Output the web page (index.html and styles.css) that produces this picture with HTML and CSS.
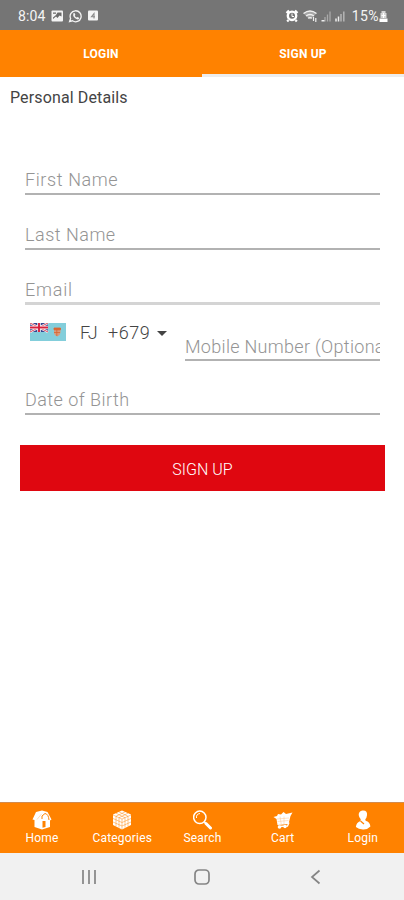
FILE: index.html
```html
<!DOCTYPE html>
<html lang="en">
<head>
  <meta charset="UTF-8">
  <meta name="viewport" content="width=device-width, initial-scale=1.0">
  <title>Sign Up</title>
  <link rel="stylesheet" href="styles.css">
</head>
<body>
  <div class="status-bar">
    <span class="time">8:04</span>
    <svg class="status-left" width="48" height="14" viewBox="0 0 48 14">
      <rect x="0.5" y="1.500" width="11.500" height="11" rx="1" fill="#f4f4f4"/>
      <path d="M2 3.500h3v1.200H2zM6.500 3.500h4v4L8.500 6.500 6.500 9 5 7.500 2 10V8.500l3-2.500z" fill="#6b6b6b"/>
      <path d="M18.600 12.500l1-3A5.500 5.500 0 1 1 21.500 11.800z" fill="none" stroke="#f4f4f4" stroke-width="1.300"/>
      <path d="M22.300 4.300l1.200-.3.900 1.800-.6.900q.7 1.300 2 1.900l.9-.7 1.500 1-.6 1.300q-1.500.7-3.800-1.300-2.400-2.400-1.500-4.600z" fill="#f4f4f4"/>
      <rect x="37" y="1.500" width="10" height="10" rx="1" fill="#f4f4f4"/>
      <path d="M43 9.500V4.500L40.500 7.700H44" fill="none" stroke="#8a8a8a" stroke-width="1.100"/>
    </svg>
    <svg class="status-right" width="62" height="14" viewBox="0 0 62 14">
      <circle cx="7" cy="6.800" r="4.200" fill="none" stroke="#fff" stroke-width="2.400"/>
      <path d="M1.500 4l2.500-2.500M12.500 4L10 1.500M3.500 11l-1.300 1.500M10.500 11l1.300 1.500" stroke="#fff" stroke-width="2.200"/>
      <path d="M7 4.500V7.500h2" fill="none" stroke="#fff" stroke-width="1"/>
      <path d="M18.500 4.500q6.500-5 13 0L27 8.500l-2 2z" fill="#a5a5a5"/>
      <path d="M18.500 4.500q6.500-5 13 0M21 7q4-3 8 0M23 9.300q2-1.500 4 0" fill="none" stroke="#f0f0f0" stroke-width="1.300"/>
      <path d="M28.500 8v4M30.800 9v4" stroke="#eee" stroke-width="1.200"/>
      <path d="M40 8v4.500M42.500 5.500v7M45 2.500v10" stroke="#aaa" stroke-width="1.300"/>
      <path d="M36.500 11.800h3M51 9.500v3M53.500 7.500v5" stroke="#eee" stroke-width="1.500"/>
      <path d="M56 5v7.500M58.800 2.500v10" stroke="#b5b5b5" stroke-width="1.500"/>
    </svg>
    <span class="battery-text">15%</span>
    <svg class="battery" width="9" height="14" viewBox="0 0 9 14">
      <path d="M2.500 2h4v2h1v5h-6V4h1z" fill="#d5d5d5"/>
      <path d="M.5 9.500h8V13h-8z" fill="#fff"/>
      <path d="M4.500 4v5M2.500 6.500h4" stroke="#fff" stroke-width="1"/>
    </svg>
  </div>

  <div class="tabs">
    <button class="tab">LOGIN</button>
    <button class="tab active">SIGN UP</button>
  </div>

  <main class="content">
    <h1>Personal Details</h1>
    <form class="signup-form">
      <div class="field"><input type="text" class="first-name" placeholder="First Name"></div>
      <div class="field"><input type="text" class="last-name" placeholder="Last Name"></div>
      <div class="field"><input type="text" class="email" placeholder="Email"></div>
      <div class="phone-row">
        <div class="country">
          <svg class="flag" width="36" height="18" viewBox="0 0 36 18">
            <rect width="36" height="18" fill="#83cedb"/>
            <rect width="18" height="9" fill="#34458f"/>
            <path d="M0 0l18 9M18 0L0 9" stroke="#fff" stroke-width="2.200"/>
            <path d="M0 0l18 9M18 0L0 9" stroke="#d32f49" stroke-width="0.900"/>
            <path d="M9 0v9M0 4.500h18" stroke="#fff" stroke-width="3.400"/>
            <path d="M9 0v9M0 4.500h18" stroke="#d8203c" stroke-width="1.900"/>
            <path d="M24 5h6.500v4.500q0 2.500-3.200 4-3.300-1.500-3.300-4z" fill="#d99a7c"/>
            <path d="M24 5h6.500v1.800H24zM26.800 6v7M24 9.500h6" stroke="#d8662f" stroke-width="0.800" fill="#dc6637"/>
          </svg>
          <span class="country-code">FJ</span>
          <span class="dial-code">+679</span>
          <span class="caret"></span>
        </div>
        <input type="text" class="mobile" placeholder="Mobile Number (Optional)">
      </div>
      <div class="field birth-row"><input type="text" class="birth" placeholder="Date of Birth"></div>
      <button type="button" class="signup-btn">SIGN UP</button>
    </form>
  </main>

  <nav class="bottom-nav">
    <a class="nav-item home">
      <svg width="20" height="20" viewBox="0 0 20 20">
        <path d="M0.500 9.500L4 2l6-1.500V19.500L2.500 17V10z" fill="#fff"/>
        <path d="M10 .5l5.500 1.500 4 7.500-1.500 1v6.500L10 19.500z" fill="#fff"/>
        <path d="M10 9V6l3-2.500q3.500.5 4 6.500" fill="none" stroke="#ff8200" stroke-width="1"/>
        <path d="M10.500 11h3v6l-3 .8z" fill="#ff8200"/>
        <path d="M9.500 4L5 9.500" stroke="#ffc68a" stroke-width=".6"/>
      </svg>
      <span>Home</span>
    </a>
    <a class="nav-item categories">
      <svg width="20" height="20" viewBox="0 0 20 20">
        <path d="M10 .5L19 4.500V15l-9 4.500L1 15V4.500z" fill="#fff"/>
        <path d="M1 5l9 4 9-4M10 9v10.500M1 8.500l9 4 9-4M1 12l9 4 9-4M4 6.300v10M7 7.700v10M13 7.700v10M16 6.300v10M4 3.200l9 4.500M7 1.900l9 4.400M16 3.200L7 7.700M13 1.900L4 6.300" fill="none" stroke="#ff8200" stroke-width=".45"/>
      </svg>
      <span>Categories</span>
    </a>
    <a class="nav-item search">
      <svg width="20" height="20" viewBox="0 0 20 20">
        <circle cx="6.800" cy="7.300" r="6.200" fill="none" stroke="#fff" stroke-width="1.500"/>
        <path d="M3.500 8q-.5-4 3.500-4.500" fill="none" stroke="#fff" stroke-width="1"/>
        <path d="M11.300 11.800l1.300 1.300" stroke="#fff" stroke-width="1.500"/>
        <path d="M13 13.500l4.500 4.500" stroke="#fff" stroke-width="3" stroke-linecap="round"/>
      </svg>
      <span>Search</span>
    </a>
    <a class="nav-item cart">
      <svg width="20" height="20" viewBox="0 0 20 20">
        <path d="M.5 7L4 6l1-2 3 .5L10.500 2l2.500 2L19.500 2.500 17.500 6l-2 8-11 1-1-6z" fill="#fff"/>
        <path d="M4 9l12-1M4.500 11.500l11-1M7 6.500l1.200 7.500M11 6.500V14" stroke="#ffc58c" stroke-width=".5"/>
        <path d="M16 12.500L14.500 16 5 16.500" fill="none" stroke="#fff" stroke-width="1.300"/>
        <circle cx="6.500" cy="17" r="1.800" fill="#fff"/>
        <circle cx="12" cy="16.500" r="1.700" fill="#fff"/>
      </svg>
      <span>Cart</span>
    </a>
    <a class="nav-item login">
      <svg width="20" height="20" viewBox="0 0 20 20">
        <path d="M9.500.5C13 .2 14.500 2.300 14 5.200q-.3 2.600-1.700 4l.3 1.500q4.400 1.300 4.800 5.800-3 3.300-7.500 3-4.500-.2-7-2.500Q3.200 12.500 7.500 11l.2-1.800Q6 7.500 5.700 5 5.600 1 9.500.5z" fill="#fff"/>
        <path d="M7.500 11l3.500 3" stroke="#ff8200" stroke-width="1.200"/>
      </svg>
      <span>Login</span>
    </a>
  </nav>

  <div class="system-nav">
    <svg width="16" height="16" viewBox="0 0 16 16"><path d="M2 1v14M8 1v14M14 1v14" stroke="#8b8b8b" stroke-width="1.800"/></svg>
    <svg width="16" height="16" viewBox="0 0 16 16"><rect x="1" y="1" width="14" height="14" rx="4" fill="none" stroke="#858585" stroke-width="1.700"/></svg>
    <svg width="16" height="16" viewBox="0 0 16 16"><path d="M12.500 1.500L5 8l7.500 6.500" fill="none" stroke="#858585" stroke-width="1.700"/></svg>
  </div>
</body>
</html>
```
FILE: styles.css
```css
* {
  box-sizing: border-box;
}
body {
  margin: 0;
  height: 900px;
  display: flex;
  flex-direction: column;
  overflow: hidden;
  font-family: Roboto, "Liberation Sans", sans-serif;
  background-color: #fff;
  color: #444;
}
button, input {
  font-family: inherit;
  border: none;
  border-radius: 0;
  outline: none;
}
.status-bar {
  height: 30px;
  flex: none;
  display: flex;
  align-items: center;
  padding: 1px 16px 0 18px;
  background-color: #757575;
  color: #f4f4f4;
  font-size: 14px;
}
.time {
  width: 33px;
  letter-spacing: 0.1px;
}
.status-right {
  margin-left: auto;
}
.battery-text {
  margin-left: 5px;
  letter-spacing: 0.4px;
}
.tabs {
  height: 47px;
  flex: none;
  display: flex;
  background-color: #ff8200;
}
.tab {
  flex: 1;
  padding: 4px 0 0;
  background: none;
  color: #fff;
  font-size: 12px;
  font-weight: 700;
  letter-spacing: 0.2px;
  border-bottom: 3px solid transparent;
}
.tab.active {
  border-bottom-color: #ededed;
}
.content {
  flex: 1;
}
h1 {
  margin: 0;
  padding: 11px 10px 0;
  height: 63px;
  font-size: 16px;
  line-height: 20px;
  font-weight: 400;
  letter-spacing: 0.13px;
}
.signup-form {
  padding: 0 24px 0 25px;
}
.field {
  height: 55px;
  display: flex;
  align-items: flex-end;
}
input {
  width: 100%;
  height: 32px;
  padding: 3px 0 0;
  background: none;
  border-bottom: 2px solid #b2b2b2;
  font-size: 18px;
  font-weight: 300;
  color: #444;
}
input::placeholder {
  color: #949494;
  opacity: 1;
}
.first-name {
  letter-spacing: 0.6px;
}
.last-name {
  letter-spacing: 0.5px;
}
.email {
  border-bottom: 3px solid #d4d4d4;
  letter-spacing: 0.8px;
}
.phone-row {
  height: 56px;
  display: flex;
  align-items: flex-end;
}
.country {
  width: 160px;
  flex: none;
  height: 100%;
  display: flex;
  align-items: flex-start;
  padding: 18px 0 0 5px;
  font-size: 18px;
  font-weight: 300;
  line-height: 20px;
}
.country-code {
  width: 28px;
  margin-left: 14px;
}
.dial-code {
  width: 42px;
  letter-spacing: 0.5px;
}
.caret {
  margin: 8px 0 0 7px;
  border: 5px solid transparent;
  border-top-color: #444;
  border-bottom: none;
}
.mobile {
  flex: 1;
  min-width: 0;
  padding-top: 5px;
  letter-spacing: 0.3px;
}
.birth-row {
  height: 54px;
}
.birth {
  letter-spacing: 0.45px;
}
.signup-btn {
  display: block;
  width: 365px;
  height: 46px;
  margin: 30px 0 0 -5px;
  padding: 2px 0 0;
  background-color: #df0710;
  color: #fff;
  font-size: 16px;
  font-weight: 300;
}
.bottom-nav {
  height: 51px;
  flex: none;
  display: flex;
  padding: 7px 1px 0 2px;
  background-color: #ff8200;
  border-top: 1px solid #d48a4a;
}
.nav-item {
  flex: 1;
  display: flex;
  flex-direction: column;
  align-items: center;
  color: #fff;
  font-size: 12px;
  line-height: 16px;
  letter-spacing: 0.2px;
}
.system-nav {
  height: 47px;
  flex: none;
  display: flex;
  justify-content: center;
  align-items: center;
  gap: 97px;
  background-color: #f1f1f1;
}
```
